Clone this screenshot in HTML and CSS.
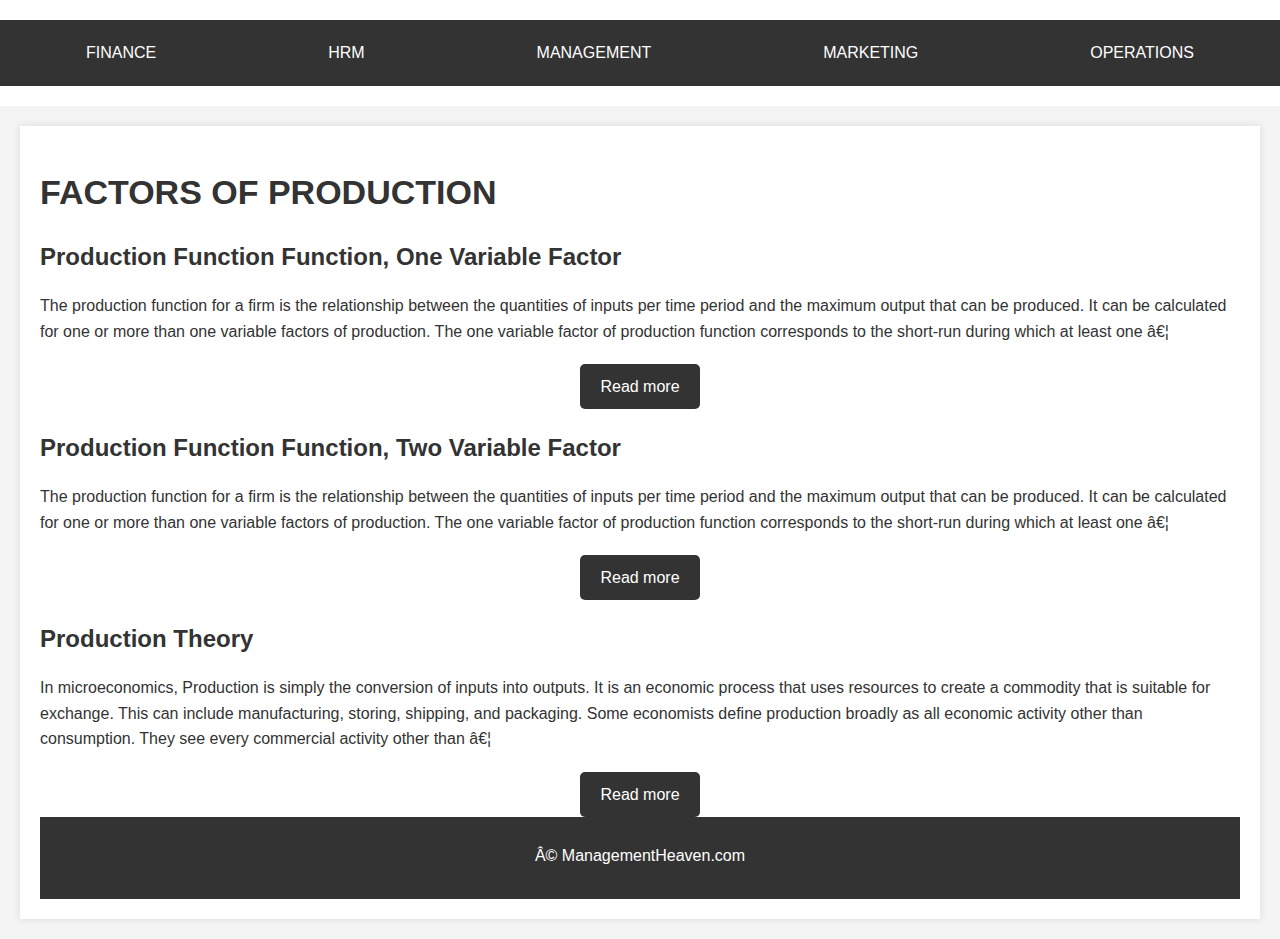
FILE: index.html
```html
<!DOCTYPE html>
<html lang="en">
<head>
<meta charset="utf-8">
<title>Factors of Production</title>
<link rel="stylesheet" href="styles.css">
</head>
<body>
<header class="site-header">
  <nav class="nav">
    <a class="nav-link" href="#">FINANCE</a>
    <a class="nav-link" href="#">HRM</a>
    <a class="nav-link" href="#">MANAGEMENT</a>
    <a class="nav-link" href="#">MARKETING</a>
    <a class="nav-link" href="#">OPERATIONS</a>
  </nav>
</header>
<main class="main">
  <div class="card">
    <h1 class="page-title">FACTORS OF PRODUCTION</h1>
    <article class="post">
      <h2 class="post-title">Production Function Function, One Variable Factor</h2>
      <p class="post-text">The production function for a firm is the relationship between the quantities of inputs per time period and the maximum output that can be produced. It can be calculated for one or more than one variable factors of production. The one variable factor of production function corresponds to the short-run during which at least one â€¦</p>
      <a class="btn" href="#">Read more</a>
    </article>
    <article class="post">
      <h2 class="post-title">Production Function Function, Two Variable Factor</h2>
      <p class="post-text">The production function for a firm is the relationship between the quantities of inputs per time period and the maximum output that can be produced. It can be calculated for one or more than one variable factors of production. The one variable factor of production function corresponds to the short-run during which at least one â€¦</p>
      <a class="btn" href="#">Read more</a>
    </article>
    <article class="post">
      <h2 class="post-title">Production Theory</h2>
      <p class="post-text">In microeconomics, Production is simply the conversion of inputs into outputs. It is an economic process that uses resources to create a commodity that is suitable for exchange. This can include manufacturing, storing, shipping, and packaging. Some economists define production broadly as all economic activity other than consumption. They see every commercial activity other than â€¦</p>
      <a class="btn" href="#">Read more</a>
    </article>
    <footer class="footer">Â© ManagementHeaven.com</footer>
  </div>
</main>
</body>
</html>
```

FILE: styles.css
```css
* { box-sizing: border-box; }

html, body {
  margin: 0;
  padding: 0;
}

body {
  font-family: "Liberation Sans", Arial, sans-serif;
  font-size: 16px;
  line-height: 1.6;
  color: #333;
  background: #fff;
}

.site-header {
  padding: 20px 0;
  background: #fff;
}

.nav {
  display: flex;
  justify-content: space-around;
  align-items: center;
  height: 66px;
  background: #333;
}

.nav-link {
  color: #fff;
  text-decoration: none;
  font-size: 16px;
  line-height: 18px;
}

.main {
  background: #f4f4f4;
  padding: 20px;
}

.card {
  background: #fff;
  padding: 20px;
  box-shadow: 0 0 8px rgba(0, 0, 0, 0.1);
}

.page-title {
  margin: 26px 0 0;
  font-size: 34px;
  line-height: 40px;
  font-weight: bold;
  color: #333;
}

.post {
  display: flex;
  flex-direction: column;
}

.post-title {
  margin: 26px 0 0;
  font-size: 24px;
  line-height: 38px;
  font-weight: bold;
  color: #333;
}

.post + .post .post-title {
  margin-top: 20px;
}

.post-text {
  margin: 17px 0 20px;
  line-height: 25.5px;
}

.btn {
  align-self: center;
  display: block;
  background: #333;
  color: #fff;
  text-decoration: none;
  padding: 10px 20px;
  border-radius: 5px;
  line-height: 25px;
}

.footer {
  background: #333;
  color: #fff;
  text-align: center;
  padding: 26px 0 30px;
  line-height: 26px;
}
```
